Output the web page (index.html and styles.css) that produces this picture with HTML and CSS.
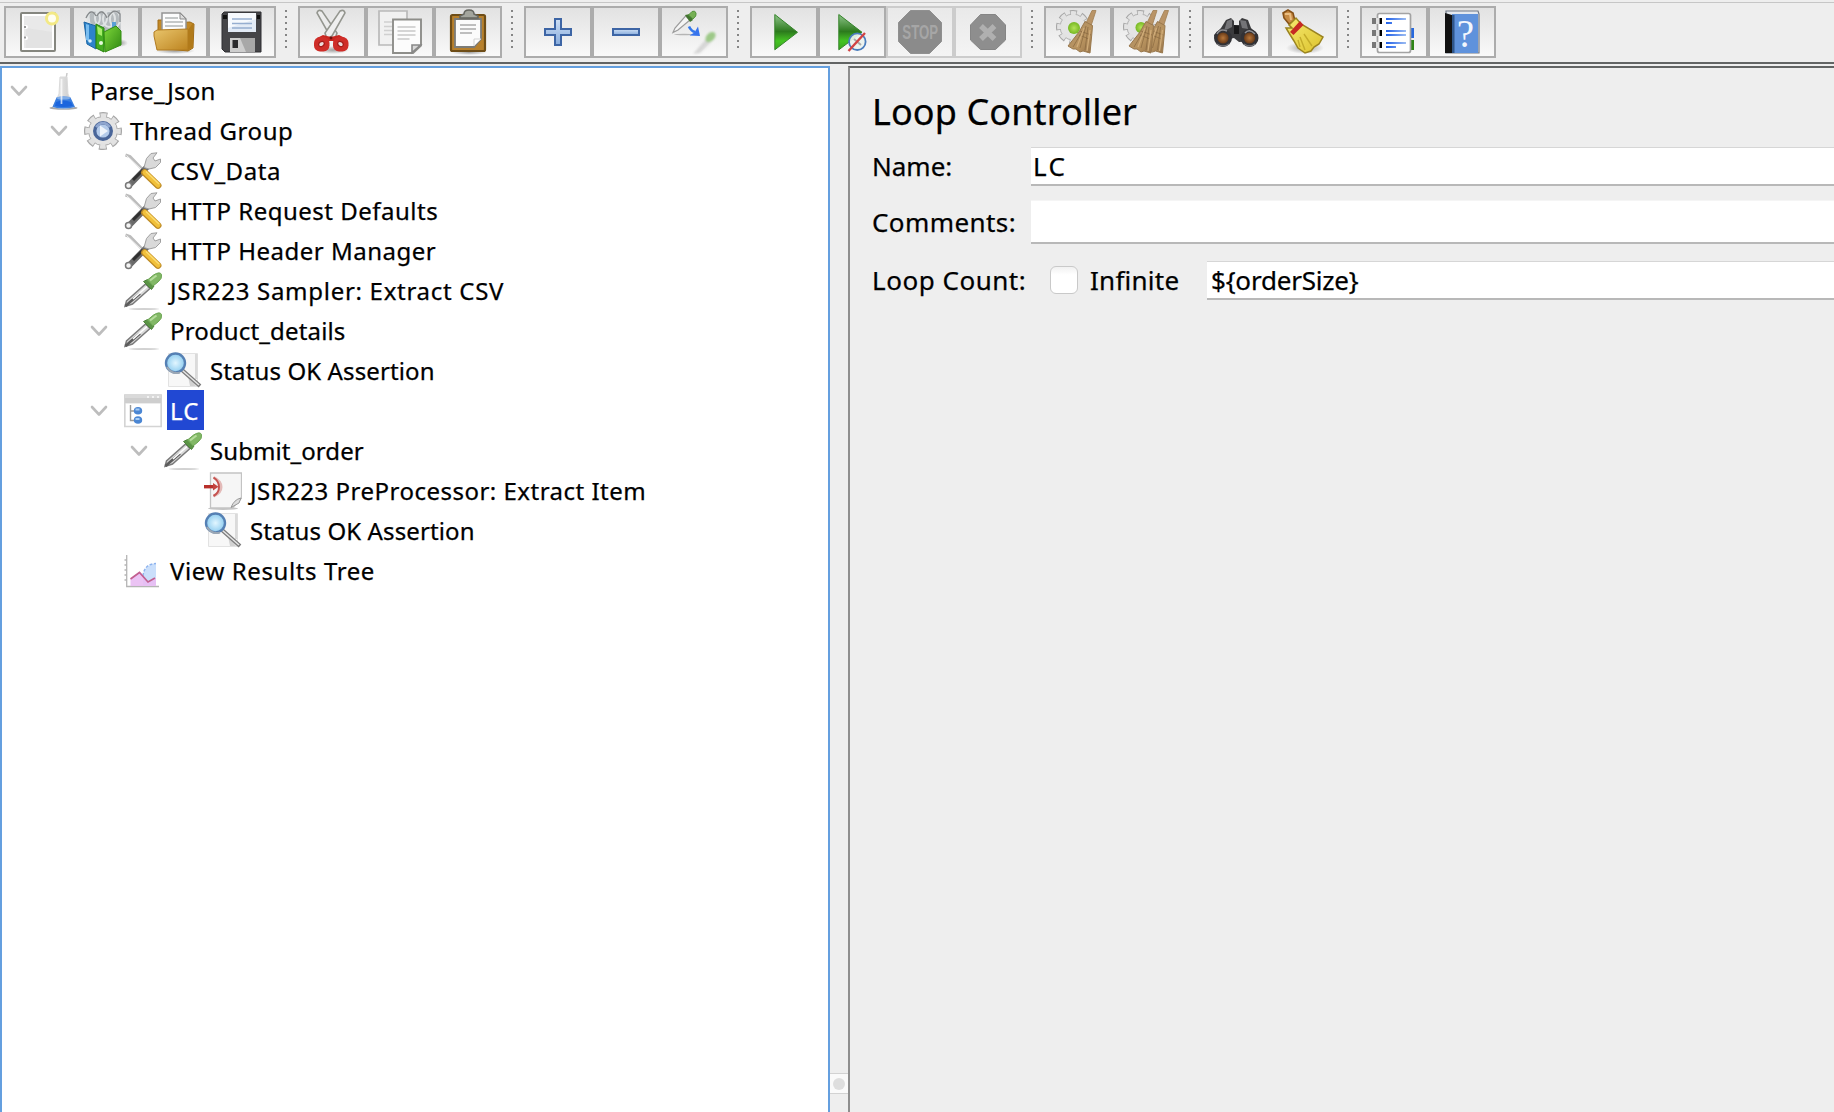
FILE: index.html
```html
<!DOCTYPE html>
<html lang="en">
<head>
<meta charset="utf-8">
<title>Parse_Json</title>
<link rel="stylesheet" href="styles.css">
</head>
<body>
<svg class="defs" width="0" height="0" aria-hidden="true">
  <defs>
    <linearGradient id="gold" x1="0" y1="0" x2="1" y2="1"><stop offset="0" stop-color="#e9c56c"/><stop offset="1" stop-color="#bd8420"/></linearGradient>
    <linearGradient id="green" x1="0" y1="0" x2="1" y2="1"><stop offset="0" stop-color="#7ed83a"/><stop offset="1" stop-color="#2f8712"/></linearGradient>
    <linearGradient id="blue" x1="0" y1="0" x2="0" y2="1"><stop offset="0" stop-color="#cfe0f5"/><stop offset="1" stop-color="#86abdc"/></linearGradient>
    <linearGradient id="play" x1="0" y1="0" x2="0" y2="1"><stop offset="0" stop-color="#8fc48a"/><stop offset=".48" stop-color="#2c7a1d"/><stop offset=".75" stop-color="#45c423"/><stop offset="1" stop-color="#3ba521"/></linearGradient>
    <linearGradient id="broom" x1="0" y1="0" x2="1" y2="1"><stop offset="0" stop-color="#b0916a"/><stop offset=".6" stop-color="#b8935f"/><stop offset="1" stop-color="#97744a"/></linearGradient>
    <linearGradient id="rule" x1="0" y1="0" x2="1" y2="0"><stop offset="0" stop-color="#1f5fe8"/><stop offset="1" stop-color="#9cbcf2"/></linearGradient>
    <linearGradient id="steel" x1="0" y1="0" x2="1" y2="0"><stop offset="0" stop-color="#f4f4f4"/><stop offset="1" stop-color="#c4c4c4"/></linearGradient>
    <linearGradient id="skirt" x1="0" y1="0" x2="1" y2="1"><stop offset="0" stop-color="#f6ea70"/><stop offset="1" stop-color="#dcc22c"/></linearGradient>
    <radialGradient id="lens"><stop offset="0" stop-color="#e2f6ff"/><stop offset="1" stop-color="#8fcdf0"/></radialGradient>
    <radialGradient id="amber"><stop offset="0" stop-color="#b8773a"/><stop offset="1" stop-color="#4e260c"/></radialGradient>
    <radialGradient id="ball"><stop offset="0" stop-color="#b4e35a"/><stop offset="1" stop-color="#76b822"/></radialGradient>
    <radialGradient id="shade"><stop offset="0" stop-color="#000" stop-opacity=".35"/><stop offset="1" stop-color="#000" stop-opacity="0"/></radialGradient>

    <symbol id="dropper" viewBox="0 0 38 38">
      <ellipse cx="20" cy="37" rx="15" ry=".9" fill="#d2d2d2"/>
      <path d="M1 34.500 2.500 29 21.500 12 26 16.500 8.500 32Z" fill="#d9d9d9" stroke="#7b7b7b" stroke-width="1.500"/>
      <path d="M1.500 34 6 30 16 21.500" fill="none" stroke="#5c5c5c" stroke-width="2.600"/>
      <path d="M9 27 23 14.500" stroke="#fff" stroke-width="1.600"/>
      <path d="M19.500 9.500 23.500 7.500 30 14 27.500 17.500Z" fill="#5b9446" stroke="#4c8339"/>
      <path d="M23.500 8 29.500 3Q36-1 37.500 2.500 38.500 6.500 34 10L29 14Z" fill="#82b866" stroke="#6ba552"/>
      <path d="M26 8.500 32.500 3.500" stroke="#b5dc9c" stroke-width="2.200"/>
    </symbol>
    <symbol id="tools" viewBox="0 0 38 38">
      <path d="M1.500 3 6 4.500 19.500 18.500" fill="none" stroke="#bcbcbc" stroke-width="3"/>
      <path d="M2.500 3.500 18 18" stroke="#f2f2f2" stroke-width="1"/>
      <path d="M5 33.500 24 14" stroke="#6a6a6a" stroke-width="6" stroke-linecap="round"/>
      <path d="M9 28 19 18" stroke="#303030" stroke-width="3"/>
      <path d="M20 15.500 22.500 6.500 27 1.500 33 .8 29 6 31 9 36.500 7 36.500 10.500 31.500 15.500 25 17Z" fill="#d9d9d9" stroke="#a0a0a0"/>
      <circle cx="4.500" cy="33.500" r="3" fill="#f4f4f4" stroke="#777" stroke-width="1.500"/>
      <path d="M20.500 20.500 34 33.500" stroke="#bd8a25" stroke-width="6.800" stroke-linecap="round"/>
      <path d="M21 20.500 34 33" stroke="#f1c03a" stroke-width="5" stroke-linecap="round"/>
      <path d="M22 19.500 35 32" stroke="#fbdc74" stroke-width="1.400"/>
    </symbol>
    <symbol id="magnifier" viewBox="0 0 38 38">
      <path d="M4.500 1.500h29V34.500h-29Z" fill="#f7f7f7" stroke="#e2e2e2"/>
      <path d="M31 2h2.500v25H31Z" fill="#dadada"/>
      <path d="M24 24 32 34H26Z" fill="#d2d2d2"/>
      <path d="M18 18 36 34" stroke="#7c7c7c" stroke-width="4"/>
      <path d="M18 18 35 33" stroke="#e6e6e6" stroke-width="1.500"/>
      <circle cx="11.500" cy="11" r="9.500" fill="url(#lens)" stroke="#5580b4" stroke-width="2.400"/>
      <path d="M3 15A10.500 10.500 0 0 0 16 20.500" fill="none" stroke="#9aa6b4" stroke-width="2"/>
    </symbol>
    <symbol id="cog" viewBox="0 0 38 38">
      <circle cx="19" cy="19" r="16" fill="none" stroke="#a6a6a6" stroke-width="6" stroke-dasharray="7.500 5.066" stroke-dashoffset="3.750"/>
      <circle cx="19" cy="19" r="14.500" fill="#e4e4e4" stroke="#ababab"/>
      <circle cx="19" cy="19" r="15" fill="none" stroke="#e2e2e2" stroke-width="5.600" stroke-dasharray="5.600 6.181" stroke-dashoffset="2.800"/>
    </symbol>
    <symbol id="sweep" viewBox="0 0 48 48">
      <path d="M38 2.500h4L37 18 31.500 16Z" fill="#b99467" stroke="#a07d50" stroke-width=".8"/>
      <path d="M31 13.500 38.500 17.500 38 24 36 45 29 43 26 44 22 41 19 41 14 38 25 24Z" fill="url(#broom)" stroke="#99784d"/>
      <path d="M26 23 37 27M32 18 26 40M34 19 31 42M29 22 19 39M25 27 35 31" stroke="#80603a" stroke-opacity=".6"/>
      <path d="M30 20 23 39M36 22 33 43" stroke="#d0ac79" stroke-width="1.300"/>
    </symbol>
    <symbol id="expander" viewBox="0 0 18 12"><path d="M2 2 9 9.500 16 2" fill="none" stroke="#bdbdbd" stroke-width="2.600" stroke-linecap="round" stroke-linejoin="round"/></symbol>
  </defs>
</svg>

<header class="toolbar">
  <div class="group">
    <button class="tool"><svg viewBox="0 0 48 48">
      <rect x="7" y="5" width="34" height="38" rx="1" fill="#fff" stroke="#85867f" stroke-width="2"/>
      <path d="M10 8h28v32H10Z" fill="#e9e9e9"/><path d="M12 20v20h26V24Z" fill="#e0e0e0" opacity=".7"/>
      <circle cx="12" cy="19" r="2" fill="#fff"/><circle cx="12" cy="30" r="2" fill="#fff"/>
      <path d="M10 18h2v2h-2ZM10 28.500h2v2h-2Z" fill="#999"/>
      <circle cx="38" cy="10.500" r="5.500" fill="#fffef0" stroke="#f3e985" stroke-width="3"/>
    </svg></button>
    <button class="tool"><svg viewBox="0 0 48 48">
      <ellipse cx="38" cy="35" rx="8" ry="4" fill="url(#shade)"/>
      <path d="M7 4 38 2 39 30 10 30Z" fill="#b4babd"/>
      <g fill="none" stroke="#dfe3e4" stroke-width="2"><ellipse cx="12" cy="10" rx="6" ry="8"/><ellipse cx="19" cy="10" rx="6" ry="8"/><ellipse cx="27" cy="11" rx="6" ry="8"/><ellipse cx="33" cy="11" rx="5" ry="8"/></g>
      <path d="M4 10Q9-1 14 8M15 8Q20-1 25 10M26 9Q32-1 38 6V14" fill="none" stroke="#85898b" stroke-width="1.300"/>
      <path d="M30 14h4v6l-4 2Z" fill="#5a9fd6"/>
      <path d="M2 14 14 18V41L5 36Z" fill="#2d83ca" stroke="#1d66a4"/><path d="M4 16 7 17V33L4 32Z" fill="#79bdf0"/>
      <path d="M14 16 22 20V44L14 40Z" fill="#45ad22" stroke="#27820c"/>
      <path d="M22 24 34 18 39 23V37L23 44Z" fill="url(#green)" stroke="#328e12"/>
      <path d="M15 18 20 21V28L16 26Z" fill="#a7ed69"/><circle cx="19" cy="35" r="2" fill="#e8fadd"/><circle cx="8" cy="33" r="1.800" fill="#d9effc"/>
    </svg></button>
    <button class="tool"><svg viewBox="0 0 48 48">
      <ellipse cx="25" cy="43" rx="20" ry="3" fill="url(#shade)"/>
      <path d="M8 12h12l2 3 18-1 4 2-1 24-5 3L8 40Z" fill="#c28927" stroke="#a16d17"/>
      <path d="M12 5h18l6 6V26H12Z" fill="#fcfcfc" stroke="#949494" stroke-width="1.500"/><path d="m30 5v6h6Z" fill="#ddd" stroke="#8b8b8b"/>
      <path d="M15 10h13M15 14h18M15 18h18" stroke="#b3b6b6" stroke-width="1.600"/>
      <path d="M4 24 7 22 38 21 38 42 7 42 4 28Z" fill="url(#gold)" stroke="#b07a20"/>
      <path d="M38 22 43 15V39L38 42Z" fill="#b17a1a"/>
    </svg></button>
    <button class="tool"><svg viewBox="0 0 48 48">
      <path d="M6 4h37v40H7l-3-3V6Z" fill="#454548" stroke="#2f2f33"/>
      <path d="M10 5h28v19H10Z" fill="#e3ebf6"/><path d="M10 5h28v6L10 20Z" fill="#f6f9fd"/>
      <path d="M14 11h20M14 15.500h20M14 20h20" stroke="#96aed0" stroke-width="1.700"/>
      <path d="M12 30h25v14H12Z" fill="#cecece"/><path d="M22 30h15v14H28Z" fill="#a8a8a8"/><rect x="14.500" y="32" width="5.500" height="8" fill="#2b2b2d"/>
      <path d="M5 7h4v4H5ZM39 7h3v4H39Z" fill="#111"/>
    </svg></button>
  </div>
  <i class="dots"></i>
  <div class="group">
    <button class="tool"><svg viewBox="0 0 48 48">
      <ellipse cx="25" cy="42" rx="16" ry="4" fill="url(#shade)"/>
      <path d="M9 5Q10 1 14 3L29 25 27 31 22 28Z" fill="#ececec" stroke="#94968f" stroke-width="1.600"/>
      <path d="M37 5Q36 1 32 3L17 25 19 31 24 28Z" fill="#efefef" stroke="#94968f" stroke-width="1.600"/>
      <path d="M9 30 15 27 23 29 31 27 37 30 31 37 25 33H21L15 37Z" fill="#c92620"/>
      <rect x="6" y="29" width="15.500" height="14.500" rx="6" fill="#cf2d28"/><rect x="25" y="29" width="15.500" height="14.500" rx="6" fill="#cf2d28"/>
      <ellipse cx="13.500" cy="36" rx="3" ry="2.300" fill="#ecdcdb" stroke="#a51a17" stroke-width="1.200" transform="rotate(-35 13.500 36)"/><ellipse cx="32.500" cy="36" rx="3" ry="2.300" fill="#ecdcdb" stroke="#a51a17" stroke-width="1.200" transform="rotate(35 32.500 36)"/>
      <circle cx="23" cy="30" r="1.400" fill="#701110"/>
    </svg></button>
    <button class="tool"><svg viewBox="0 0 48 48">
      <path d="M3 3h28v34H3Z" fill="#f1f1f1" stroke="#b9b9b9" stroke-width="1.700"/>
      <path d="M8 14h8M8 18.500h8M8 22.500h8M8 26.500h8" stroke="#d0d0d0" stroke-width="1.600"/>
      <path d="M17 11.500h28v26L37 45H17Z" fill="#fcfcfc" stroke="#8e8e8a" stroke-width="1.900"/>
      <path d="M21.500 19h18M21.500 23h18M21.500 27h18M21.500 31h12" stroke="#c7c7c7" stroke-width="1.700"/>
      <path d="M36 44.500V37h8.500Z" fill="#d8d8d8" stroke="#888" stroke-width="1.600"/>
    </svg></button>
    <button class="tool"><svg viewBox="0 0 48 48">
      <ellipse cx="25" cy="44.500" rx="18" ry="2.500" fill="url(#shade)"/>
      <rect x="7" y="7" width="34" height="36" rx="1.500" fill="#b7802c" stroke="#6e4d17" stroke-width="2.200"/>
      <path d="M11 11h26v20l-7 8H11Z" fill="#fbfbfb" stroke="#7c7c78" stroke-width="1.800"/>
      <path d="M30 38v-7h7Z" fill="#fff" stroke="#d2d2d2"/>
      <path d="M16 17h16M16 21h16M16 25h12" stroke="#aaa" stroke-width="1.700"/>
      <path d="M16 10V8l4-2q0-4 5-4t5 4l4 2v2Z" fill="#a3a59d" stroke="#64655f" stroke-width="1.500"/>
    </svg></button>
  </div>
  <i class="dots"></i>
  <div class="group">
    <button class="tool"><svg viewBox="0 0 48 48"><path d="M21 11h6v10h10v6H27v10h-6V27H11v-6h10Z" fill="url(#blue)" stroke="#3d65a5" stroke-width="2"/></svg></button>
    <button class="tool"><svg viewBox="0 0 48 48"><path d="M11 21h26v6H11Z" fill="url(#blue)" stroke="#3d65a5" stroke-width="2"/></svg></button>
    <button class="tool"><svg viewBox="0 0 48 48">
      <ellipse cx="14" cy="26.500" rx="10" ry=".7" fill="#b5b5b5"/>
      <path d="M3 24.500 5 20 15.500 8 20 12 8 22Z" fill="#f5f5f5" stroke="#9b9b9b" stroke-width="1.200"/>
      <path d="m15 7 5-1 3 6-3 2Z" fill="#42752f"/><path d="M18.500 7 22 3.500Q25 2 26 5t-3 6Z" fill="#76b054" stroke="#579540"/>
      <path d="M19 18.500Q21 23 25 24" fill="none" stroke="#3277eb" stroke-width="2.600"/><path d="m28 18.500 2 9.500-10.500-.5 5-3Z" fill="#3673ed"/>
      <g class="faded"><path d="M23 46 36 31 41 34 30 45Z" fill="#ccc"/><ellipse cx="40.500" cy="29" rx="6" ry="4" transform="rotate(-45 40.500 29)" fill="#82bc66"/></g>
    </svg></button>
  </div>
  <i class="dots"></i>
  <div class="group">
    <button class="tool"><svg viewBox="0 0 48 48"><path d="M14.800 6.500 37.500 24.300 14.800 41.800Z" fill="url(#play)" stroke="#35842a"/></svg></button>
    <button class="tool"><svg viewBox="0 0 48 48">
      <path d="M10.800 6.500 34 24.300 10.800 41.800Z" fill="url(#play)" stroke="#35842a"/>
      <circle cx="29.300" cy="33.700" r="8.300" fill="#edf3ee" fill-opacity=".92" stroke="#4a7dbd" stroke-width="1.800"/><path d="M26 31 33 37" stroke="#aaa" stroke-width="2"/>
      <path d="M37 25 20.500 43" stroke="#d24343" stroke-width="2.400"/>
    </svg></button>
    <button class="tool off"><svg viewBox="0 0 48 48">
      <path d="M14.500 2.500h19l12 12v19l-12 12h-19l-12-12v-19Z" fill="#8b8b8b" stroke="#909090"/>
      <g transform="translate(24.200 31) scale(.66 1)"><text text-anchor="middle" class="stop">STOP</text></g>
    </svg></button>
    <button class="tool off"><svg viewBox="0 0 48 48">
      <path d="M16.500 6.500h15l10 10.500v15l-10 9.500h-15L6.500 32V17Z" fill="#8e8e8e" stroke="#858585"/>
      <path d="M17 18 30.500 31M30.500 18 17 31" stroke="#b0b0b0" stroke-width="5.400"/>
    </svg></button>
  </div>
  <i class="dots"></i>
  <div class="group">
    <button class="tool"><svg viewBox="0 0 48 48">
      <use href="#cog" x="2" y="1" width="34" height="36"/><circle cx="20" cy="20" r="6" fill="url(#ball)"/><use href="#sweep"/>
    </svg></button>
    <button class="tool"><svg viewBox="0 0 48 48">
      <use href="#cog" x="1" y="1" width="34" height="36"/><circle cx="19" cy="19.500" r="5.500" fill="url(#ball)"/>
      <use href="#sweep" x="4.500" width="48" height="48"/><use href="#sweep" x="-7" width="48" height="48"/>
    </svg></button>
  </div>
  <i class="dots"></i>
  <div class="group">
    <button class="tool"><svg viewBox="0 0 48 48">
      <path d="M14 12 19 10 22 13 22 17 27 17 27 13 30 10 36 12 39 20 46 27 44 33 27 34 22 30 4 34 2 27 9 20Z" fill="#3b3b3d"/>
      <path d="M15 13 20 11V19L12 23ZM28 12 34 13 36 21 30 20Z" fill="#747477"/>
      <path d="M22 17 27 18 27 26 22 26Z" fill="#181819"/>
      <circle cx="11" cy="30" r="7.300" fill="url(#amber)" stroke="#323236" stroke-width="3.400"/><circle cx="37.500" cy="30" r="7.300" fill="url(#amber)" stroke="#323236" stroke-width="3.400"/>
      <path d="M5 26Q8 20 15 23M33 25Q37 20 43 26" fill="none" stroke="#8e8e92" stroke-width="1.500"/>
      <path d="M5 36Q11 40 17 36M32 36Q38 40 43 36" fill="none" stroke="#77777b" stroke-width="1.300"/>
    </svg></button>
    <button class="tool"><svg viewBox="0 0 48 48">
      <ellipse cx="25" cy="40" rx="19" ry="6" fill="url(#shade)"/>
      <path d="M3 5 8 2 13 5 15 13 9 16 4 10Z" fill="#c78b45" stroke="#865118" stroke-width="1.600"/><path d="M5 6h5l1 6" fill="none" stroke="#e9bd82" stroke-width="2"/>
      <path d="M6 20 12 20 9 17 16 10 21 16 43 29 39 36 34 39 31 43 25 45 18 40 14 33 9 25Z" fill="url(#skirt)" stroke="#9b8420" stroke-width="1.500"/>
      <path d="M10 24 20 13 23.500 17 13.500 27Z" fill="#c62a23"/>
      <path d="M20 29 25 42M24 26 32 38M18 32 20 39" stroke="#c4ac2a" stroke-width="1.400"/>
    </svg></button>
  </div>
  <i class="dots"></i>
  <div class="group">
    <button class="tool"><svg viewBox="0 0 48 48">
      <path d="M39 20h5v10h-5Z" fill="#2869dd"/><path d="M39 32h5v10h-5Z" fill="#2e8517"/>
      <rect x="7.500" y="5.500" width="33" height="39" rx="2" fill="#fff" stroke="#a3a3a3" stroke-width="1.700"/>
      <g><path d="M2 10h4v6H2ZM2 22h4v6H2ZM2 34h4v6H2Z" fill="#777"/><path d="M6 10h3v6H6ZM6 22h3v6H6ZM6 34h3v6H6Z" fill="#e0e0e0"/><path d="M9.500 10h2.500v6H9.500ZM9.500 22h2.500v6H9.500ZM9.500 34h2.500v6H9.500Z" fill="#000"/></g>
      <path d="M16 10h20v2H16ZM16 14h6v2h-6ZM16 22h20v2H16ZM16 26h20v2H16ZM16 34h20v2H16ZM16 38h10v2H16Z" fill="url(#rule)"/>
    </svg></button>
    <button class="tool"><svg viewBox="0 0 48 48">
      <path d="M8 3h32l1 3v39H8Z" fill="#e4e8ee" stroke="#707885" stroke-width="1.200"/>
      <path d="M14 6h26v39H14Z" fill="#5f92dc"/><path d="M7 5 14 7V45H7Z" fill="#111"/><path d="M14 7h2.500v38H14Z" fill="#2f5589"/>
      <text x="27.500" y="38.500" text-anchor="middle" class="help">?</text>
    </svg></button>
  </div>
</header>

<main class="split">
  <ul class="tree">
    <li class="l0"><svg class="tw"><use href="#expander"/></svg><svg class="ic" viewBox="0 0 38 38">
      <path d="M20 20 23 1" stroke="#c9c9c9" stroke-width="1.500"/><ellipse cx="19.500" cy="36" rx="14" ry="1.700" fill="#aaa"/>
      <path d="M16 5h7l1 17 6 13q-10 3-21 0l6-13Z" fill="url(#steel)" stroke="#dadada"/>
      <path d="M12.500 25.500q7-2 14 0l4.500 9.500q-12 3-22.500 0Z" fill="#3a7edf"/><path d="M12 30q7-3 15 0l2 4q-10 2-18 0Z" fill="#1c65dd"/><ellipse cx="19.500" cy="26" rx="7" ry="1.600" fill="#80ade8"/>
      <path d="M17.500 7V32" stroke="#fff" stroke-opacity=".7" stroke-width="1.700"/></svg><span style="letter-spacing:.22px">Parse_Json</span></li>
    <li class="l1"><svg class="tw"><use href="#expander"/></svg><svg class="ic" viewBox="0 0 38 38"><use href="#cog"/><circle cx="19" cy="19" r="8.300" fill="#b4cbea" stroke="#4a6699" stroke-width="3.400"/><path d="M12 15Q19 7 26 15" fill="none" stroke="#8fa6cf" stroke-width="2.500"/><path d="M16 13.500 24 19 16 24.500Z" fill="#eef4fb"/></svg><span style="letter-spacing:.56px">Thread Group</span></li>
    <li class="l2"><svg class="ic"><use href="#tools"/></svg><span style="letter-spacing:.55px">CSV_Data</span></li>
    <li class="l2"><svg class="ic"><use href="#tools"/></svg><span style="letter-spacing:.5px">HTTP Request Defaults</span></li>
    <li class="l2"><svg class="ic"><use href="#tools"/></svg><span style="letter-spacing:.5px">HTTP Header Manager</span></li>
    <li class="l2"><svg class="ic"><use href="#dropper"/></svg><span style="letter-spacing:.71px">JSR223 Sampler: Extract CSV</span></li>
    <li class="l2"><svg class="tw"><use href="#expander"/></svg><svg class="ic"><use href="#dropper"/></svg><span style="letter-spacing:.15px">Product_details</span></li>
    <li class="l3"><svg class="ic"><use href="#magnifier"/></svg><span style="letter-spacing:.12px">Status OK Assertion</span></li>
    <li class="l2"><svg class="tw"><use href="#expander"/></svg><svg class="ic" viewBox="0 0 38 38"><path d="M.8 3h36.400v31.500H.8Z" fill="#fff" stroke="#d4d4d4" stroke-width="1.700"/><path d="M1 2h36v9.500H1Z" fill="#dadada"/><path d="M1 6h36v5H1Z" fill="#cecece"/><path d="M23 4h2v2h-2ZM28 4h2v2h-2ZM33 4h2v2h-2Z" fill="#f3f3f3"/><path d="M6.500 13v15.500H12M6.500 19H12" fill="none" stroke="#9b9b9b" stroke-width="1.400"/><ellipse cx="14" cy="18.700" rx="4.200" ry="3.800" fill="#4b86d3"/><ellipse cx="14" cy="28" rx="4.200" ry="3.800" fill="#4b86d3"/><path d="M11.500 17.500h4M11.500 27h4" stroke="#a6ccf5" stroke-width="1.800"/></svg><span class="selected">LC</span></li>
    <li class="l3"><svg class="tw"><use href="#expander"/></svg><svg class="ic"><use href="#dropper"/></svg><span style="letter-spacing:.07px">Submit_order</span></li>
    <li class="l4"><svg class="ic" viewBox="0 0 38 38"><ellipse cx="19" cy="36.500" rx="15" ry="1.400" fill="#c4c4c4"/><path d="M6.500 1h31v25l-9 10h-22Z" fill="#f6f6f6" stroke="#c3c3c3" stroke-width="1.300"/><path d="M27 35.500q3-8 10-9.500l-2 5Z" fill="#ddd" stroke="#999"/><path d="M9.500 5.500Q17 9 17 15T9.500 24" fill="none" stroke="#e3bab8" stroke-width="3"/><path d="M9.500 5.500Q15 9 15 15T9.500 24" fill="none" stroke="#c65350" stroke-width="2"/><path d="M0 14.700h10" stroke="#b8302b" stroke-width="3.400"/><path d="M9 11 14.500 14.700 9 18.500Z" fill="#c34440"/></svg><span style="letter-spacing:.49px">JSR223 PreProcessor: Extract Item</span></li>
    <li class="l4"><svg class="ic"><use href="#magnifier"/></svg><span style="letter-spacing:.12px">Status OK Assertion</span></li>
    <li class="l2"><svg class="ic" viewBox="0 0 38 38"><path d="M2.700 3V34.500H35M.5 8h2M.5 13h2M.5 18h2M.5 23h2M.5 28h2" fill="none" stroke="#b5b5b5" stroke-width="1.300"/><path d="M19 33.500V24Q20 13 32 11.500V33.500Z" fill="#cadffb"/><path d="M19 24Q20 12 32 11.500" fill="none" stroke="#8db3ee" stroke-width="1.400" stroke-dasharray="3 1.500"/><path d="M6.500 27 15.500 20.500 24 30 32 26V34H6.500Z" fill="#e9bdf3" fill-opacity=".9"/><path d="M6.500 27 15.500 20.500 24 30 31 26" fill="none" stroke="#c25f90" stroke-width="1.700"/></svg><span style="letter-spacing:.6px">View Results Tree</span></li>
  </ul>
  <div class="divider"><div class="grip"><i></i></div></div>
  <section class="panel">
    <h1>Loop Controller</h1>
    <div class="field name"><label>Name:</label><div class="input">LC</div></div>
    <div class="field comments"><label>Comments:</label><div class="input"></div></div>
    <div class="field count"><label>Loop Count:</label><i class="check"></i><span class="infinite">Infinite</span><div class="input">${orderSize}</div></div>
  </section>
</main>
</body>
</html>
```
FILE: styles.css
```css
* { box-sizing: border-box; }

body {
  margin: 0;
  width: 1834px;
  height: 1112px;
  overflow: hidden;
  display: flex;
  flex-direction: column;
  background: #eeeeee;
  color: #000;
  font-family: "Noto Sans", sans-serif;
  font-size: 24px;
  -webkit-text-stroke: .25px currentColor;
}

.defs { position: absolute; }

/* Toolbar */
.toolbar {
  flex: none;
  height: 64px;
  padding: 4px 0 0 4px;
  display: flex;
  align-items: flex-start;
  border-bottom: 2px solid #626464;
  border-top: 2px solid #eeeeee;
  box-shadow: inset 0 1px #c6c6c6;
}

.group { display: flex; }

.tool {
  width: 68px;
  height: 52px;
  padding: 0;
  display: flex;
  align-items: center;
  justify-content: center;
  border: 2px solid #acacac;
  border-radius: 0;
  background: linear-gradient(#e2e2e2, #f9f9f9);
}

.tool.off { border-color: #cccccc; background: linear-gradient(#e9e9e9, #f4f4f4); }

.tool svg { width: 48px; height: 48px; flex: none; overflow: visible; -webkit-text-stroke: 0; }

.stop { font: bold 20px "Liberation Sans", sans-serif; fill: #a6a6a6; }
.help { font: 39px "Liberation Serif", serif; fill: #f2f6fd; }
.faded { opacity: .75; filter: blur(1.2px); }

.dots {
  width: 2px;
  height: 38px;
  margin: 4px 11px 0 9px;
  background: repeating-linear-gradient(#858585 0 2px, transparent 2px 6px);
}

/* Tree and detail panes */
.split { flex: 1; min-height: 0; margin-top: 2px; display: flex; }

.tree {
  width: 830px;
  margin: 0;
  padding: 2px 0 0;
  list-style: none;
  background: #fff;
  border: 2px solid #649fdf;
  border-bottom: 0;
}

.tree li { height: 40px; display: flex; align-items: center; }
.tree .l0 { padding-left: 2px; }
.tree .l1 { padding-left: 42px; }
.tree .l2 { padding-left: 82px; }
.tree .l3 { padding-left: 122px; }
.tree .l4 { padding-left: 162px; }

.tw { width: 18px; height: 12px; margin: 2px -24px 0 6px; }
.ic { width: 38px; height: 38px; margin: 2px 5px 0 40px; flex: none; }

.tree span {
  height: 40px;
  padding-left: 3px;
  line-height: 41px;
  white-space: nowrap;
}

.tree .selected {
  width: 37px;
  letter-spacing: 1.2px;
  color: #fff;
  background: #2148d3;
}

.divider { width: 18px; display: flex; align-items: flex-end; }

.grip {
  width: 18px;
  height: 21px;
  margin-bottom: 18px;
  display: grid;
  place-items: center;
  background: #fafafa;
  border: solid #d2d2d2;
  border-width: 1px 0;
}

.grip i { width: 12px; height: 12px; border-radius: 50%; background: #dedede; }

.panel {
  flex: 1;
  padding-left: 22px;
  font-size: 26px;
  border-top: 2px solid #626464;
  border-left: 2px solid #8e8e8e;
}

.panel h1 {
  margin: 17px 0 12px;
  height: 50px;
  font-size: 36px;
  font-weight: 400;
  line-height: 53px;
  letter-spacing: .11px;
}

.field { display: flex; align-items: stretch; white-space: nowrap; }
.field label { width: 159px; }

.input {
  flex: 1;
  padding-left: 2px;
  background: #fff;
  border-top: 1px solid #d6d6d6;
  border-bottom: 2px solid #b8b8b8;
}

.name { height: 39px; line-height: 38px; letter-spacing: 0; }
.name .input { letter-spacing: 2.4px; line-height: 37px; }

.comments { height: 44px; margin-top: 14px; line-height: 44px; letter-spacing: .42px; }
.comments .input { border-top-color: #f5f5f5; }

.count { height: 39px; margin-top: 17px; line-height: 38px; }
.count label { width: 178px; letter-spacing: .52px; }

.check {
  width: 28px;
  height: 28px;
  margin: 5px 12px 0 0;
  border: 1px solid #c9c9c9;
  border-radius: 6px;
  background: linear-gradient(#f1f1f1, #fff 30%);
}

.infinite { width: 117px; letter-spacing: .25px; }
.count .input { padding-left: 4px; line-height: 37px; letter-spacing: -.2px; }
```
